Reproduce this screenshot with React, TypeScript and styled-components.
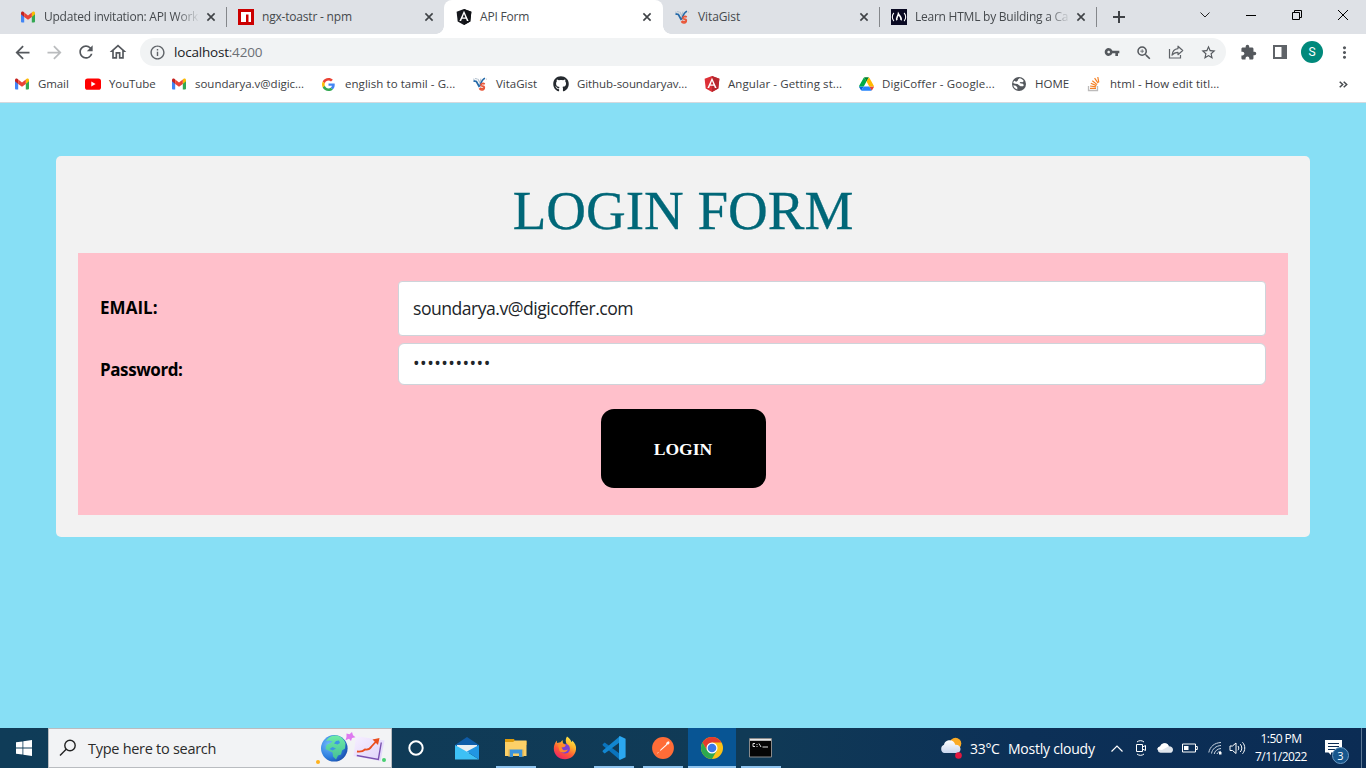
import React from 'react';
import styled, { createGlobalStyle } from 'styled-components';
import { MdArrowBack, MdArrowForward, MdRefresh, MdOutlineHome, MdInfoOutline, MdVpnKey, MdZoomIn, MdStarBorder, MdExtension, MdMoreVert } from 'react-icons/md';
import { FaGithub } from 'react-icons/fa';

const Global = createGlobalStyle`
  * { box-sizing: border-box; }
  body { margin: 0; overflow: hidden; font-family: "Open Sans", "Noto Sans", sans-serif; }
  svg { display: block; flex: none; }
`;

const Screen = styled.div`
  width: 1366px;
  height: 768px;
  display: flex;
  flex-direction: column;
  overflow: hidden;
`;

/* ---------- browser chrome ---------- */
const TabStrip = styled.div`
  height: 34px;
  flex: none;
  background: #dee1e6;
  display: flex;
  padding-left: 8px;
`;
const Tab = styled.div<{ $active?: boolean; $divider?: boolean; $width: number }>`
  position: relative;
  width: ${p => p.$width}px;
  margin-right: ${p => (p.$active ? -1 : 0)}px;
  height: 34px;
  padding-left: 12px;
  display: flex;
  align-items: center;
  background: ${p => (p.$active ? '#fff' : 'transparent')};
  border-radius: 8px 8px 0 0;
  ${p => p.$divider && `
    &::after { content: ''; position: absolute; right: -1px; top: 7px; width: 1px; height: 20px; background: #84878b; }
  `}
  ${p => p.$active && `
    &::before, &::after { content: ''; position: absolute; bottom: 0; width: 8px; height: 8px; }
    &::before { left: -8px; background: radial-gradient(circle at 0 0, transparent 7.5px, #fff 8px); }
    &::after { right: -8px; background: radial-gradient(circle at 100% 0, transparent 7.5px, #fff 8px); }
  `}
`;
const TabTitle = styled.span<{ $ls: number; $fade?: boolean; $width?: number }>`
  width: ${p => p.$width ?? 155}px;
  margin: 0 4px 0 8px;
  white-space: nowrap;
  font-size: 12px;
  line-height: 18px;
  color: #45494d;
  letter-spacing: ${p => p.$ls}px;
  ${p => p.$fade && 'mask-image: linear-gradient(90deg, #000 132px, transparent 156px);'}
`;
const NewTab = styled.div`
  width: 28px;
  margin-left: 9px;
  display: flex;
  align-items: center;
  justify-content: center;
`;
const WindowButtons = styled.div`
  margin-left: auto;
  display: flex;
  height: 29px;
`;
const WindowButton = styled.div`
  width: 46px;
  display: flex;
  align-items: center;
  justify-content: center;
`;
const Toolbar = styled.div`
  height: 36px;
  flex: none;
  background: #fff;
  display: flex;
  align-items: center;
  color: #5f6368;
`;
const NavButton = styled.div<{ $faded?: boolean; $drop?: number }>`
  width: 32px;
  padding-top: ${p => p.$drop ?? 0}px;
  display: flex;
  justify-content: center;
  color: ${p => (p.$faded ? '#babcbe' : '#54585d')};
`;
const NavGroup = styled.div`
  display: flex;
  align-items: center;
  padding-left: 6px;
  width: 140px;
`;
const ToolGroup = styled.div`
  display: flex;
  align-items: center;
  padding-left: 6px;
`;
const Omnibox = styled.div`
  width: 1086px;
  height: 28px;
  border-radius: 14px;
  background: #f1f3f4;
  display: flex;
  align-items: center;
  padding: 0 2px 0 9px;
`;
const Url = styled.span`
  flex: 1;
  margin-left: 8px;
  font-size: 13.5px;
  letter-spacing: -0.2px;
  color: #202124;
  i { font-style: normal; color: #6b6f74; }
`;
const Avatar = styled.div`
  width: 22px;
  height: 22px;
  border-radius: 50%;
  background: #00897b;
  color: #fff;
  font: 12px/22px Roboto, sans-serif;
  text-align: center;
`;
const Bookmarks = styled.div`
  height: 33px;
  flex: none;
  background: #fff;
  border-bottom: 1px solid #d5d9de;
  display: flex;
  align-items: center;
  padding: 0 0 4px 14px;
`;
const Bookmark = styled.div<{ $width: number; $gap: number; $ls?: number }>`
  width: ${p => p.$width}px;
  display: flex;
  align-items: center;
  gap: ${p => p.$gap}px;
  white-space: nowrap;
  font-size: 11.5px;
  line-height: 18px;
  letter-spacing: ${p => p.$ls ?? 0}px;
  color: #3c4043;
`;
const Overflow = styled.div`
  margin-left: auto;
  margin-right: 18px;
`;

/* ---------- web page ---------- */
const Page = styled.main`
  flex: 1;
  background: #87dff5;
  padding: 53px 56px 0;
`;
const Card = styled.section`
  height: 381px;
  border-radius: 5px;
  background: #f2f2f2;
  padding: 0 22px;
`;
const Heading = styled.h1`
  margin: 0;
  height: 97px;
  padding-top: 23px;
  font: 400 55px/64px "Liberation Serif", serif;
  -webkit-text-stroke: 0.3px #006778;
  color: #006778;
  text-align: center;
`;
const Form = styled.form`
  height: 262px;
  background: #ffc0cb;
  padding: 28px 22px 0;
  display: flex;
  flex-direction: column;
`;
const FieldRow = styled.div<{ $gap: number }>`
  display: flex;
  align-items: center;
  margin-bottom: ${p => p.$gap}px;
`;
const FieldLabel = styled.label<{ $top: number; $bottom: number; $ls: number }>`
  width: 298px;
  padding: ${p => p.$top}px 0 ${p => p.$bottom}px;
  font-size: 17px;
  font-weight: 700;
  line-height: 24px;
  letter-spacing: ${p => p.$ls}px;
  color: #000;
`;
const Field = styled.input<{ $height: number; $radius: number; $ls: number }>`
  width: 868px;
  height: ${p => p.$height}px;
  border: 1px solid #ced4da;
  border-radius: ${p => p.$radius}px;
  background: #fff;
  padding: 0 14px 2px;
  font: 400 17.6px "Open Sans", sans-serif;
  letter-spacing: ${p => p.$ls}px;
  color: #212529;
  outline: none;
`;
const LoginButton = styled.button`
  align-self: center;
  width: 165px;
  height: 79px;
  border: 0;
  border-radius: 13px;
  background: #000;
  color: #fff;
  padding: 2px 0 0;
  font: 700 17.6px "Liberation Serif", serif;
`;

/* ---------- taskbar ---------- */
const Taskbar = styled.footer`
  height: 40px;
  flex: none;
  display: flex;
  background: linear-gradient(90deg, #0f3c58 0%, #103a56 55%, #0c3057 75%, #0b2c54 100%);
  color: #fff;
`;
const Start = styled.div`
  width: 48px;
  display: flex;
  align-items: center;
  justify-content: center;
`;
const Search = styled.div`
  width: 344px;
  border: 1px solid #b9bcc0;
  background: #f2f3f5;
  display: flex;
  align-items: center;
  padding-left: 10px;
  color: #2b2b2b;
  font-size: 14.5px;
  letter-spacing: -0.28px;
`;
const SearchText = styled.span`
  margin-left: 11px;
  flex: 1;
`;
const TaskButton = styled.div<{ $first?: boolean; $running?: boolean; $active?: boolean }>`
  flex: none;
  width: ${p => (p.$first ? 50 : p.$active ? 48 : 49)}px;
  margin-left: ${p => (p.$active ? 1 : 0)}px;
  padding-right: ${p => (p.$first ? 2 : 0)}px;
  position: relative;
  display: flex;
  align-items: center;
  justify-content: center;
  background: ${p => (p.$active ? '#085594' : 'transparent')};
  ${p => p.$running && `
    &::after { content: ''; position: absolute; bottom: 0; left: ${p.$active ? 0 : 5}px; right: ${p.$active ? 0 : 4}px; height: 2px; background: #8fc4ef; }
  `}
`;
const Tray = styled.div`
  margin-left: auto;
  display: flex;
  align-items: center;
`;
const TrayText = styled.span<{ $width: number; $ls?: number }>`
  width: ${p => p.$width}px;
  white-space: nowrap;
  font-size: 14px;
  padding-top: 1px;
  letter-spacing: ${p => p.$ls ?? 0}px;
`;
const TrayIcon = styled.div<{ $width: number; $start?: boolean }>`
  width: ${p => p.$width}px;
  display: flex;
  justify-content: ${p => (p.$start ? 'flex-start' : 'center')};
`;
const Clock = styled.div`
  width: 68px;
  text-align: center;
  font-size: 12px;
  line-height: 18px;
  letter-spacing: -0.55px;
  white-space: nowrap;
  padding-bottom: 1px;
`;
const Notice = styled.div`
  width: 46px;
  height: 40px;
  position: relative;
  padding: 12px 0 0 10px;
`;
const NoticeCount = styled.span`
  position: absolute;
  left: 17px;
  top: 19px;
  width: 17px;
  height: 17px;
  border-radius: 50%;
  border: 1px solid #6d9cc4;
  background: #17568c;
  font-size: 11px;
  line-height: 15px;
  text-align: center;
`;
const DesktopEdge = styled.div`
  width: 5px;
  height: 40px;
  border-left: 1px solid #5c7895;
`;

/* ---------- icons ---------- */
const Gmail = ({ size = 16 }: { size?: number }) => (
  <svg width={size} height={size} viewBox="0 0 16 16">
    <path d="M1 3.800v8.700c0 .5.400.900.900.900h2.300V7.200z" fill="#4285f4" />
    <path d="M15 3.800v8.700c0 .5-.4.900-.9.900h-2.300V7.200z" fill="#34a853" />
    <path d="M11.800 3.500v4.400L15 5.300V4c0-1.500-1.500-2-2.400-1.200z" fill="#fbbc04" />
    <path d="M4.200 3.500v4.400L1 5.300V4c0-1.500 1.500-2 2.400-1.200z" fill="#c5221f" />
    <path d="M4.200 7.900V3.500L8 6.400l3.800-2.900v4.400L8 10.800z" fill="#ea4335" />
  </svg>
);
const Npm = () => (
  <svg width="16" height="16" viewBox="0 0 16 16">
    <path fill="#c00" d="M0 0h16v16H0z" />
    <path fill="#fff" d="M3 3h10v10h-2.500V5.500H8V13H3z" />
  </svg>
);
const Angular = ({ dark, size = 16 }: { dark?: boolean; size?: number }) => (
  <svg width={size} height={size} viewBox="0 0 16 16">
    <path fill={dark ? '#16181d' : '#dd2f36'} d="M8 0l7.400 2.700-1.100 9.800L8 16l-6.300-3.500L.6 2.700z" />
    <path fill={dark ? '#101216' : '#b7272e'} d="M8 0l7.400 2.700-1.100 9.800L8 16z" />
    <path fill="#fff" fillRule="evenodd" d="M8 1.800l4.600 10.300h-1.700l-.9-2.300H6l-.9 2.300H3.400zM8 5L6.600 8.400h2.800z" />
  </svg>
);
const Vita = () => (
  <svg width="16" height="16" viewBox="0 0 16 16" fill="none">
    <path d="M1.500 4.800l2.900.7 3 5.500" stroke="#2469a8" strokeWidth="1.700" />
    <path d="M3 2.500l2.500.5M6 3l2 4.500M9 2.600L8 6M1.200 3l1.300.5" stroke="#b4c2cf" strokeWidth="1.100" />
    <path d="M13 2.200C10.500 3 9.200 5.500 7.800 10.200" stroke="#2469a8" strokeWidth="1.700" />
    <path d="M12.800 8c-1.800-1-4-.3-3.800 1.200.3 1.300 3 .6 3.300 1.900.3 1.500-2.500 2.300-4.600.9" stroke="#e9573a" strokeWidth="1.800" />
    <path d="M7.300 12.500c1.200 2.300 5 2 5-.8" stroke="#e9573a" strokeWidth="1.500" />
    <path d="M14.500 2.700v.8" stroke="#bbb" />
  </svg>
);
const Camp = () => (
  <svg width="16" height="16" viewBox="0 0 16 16" fill="none" stroke="#fff">
    <path fill="#0a0a23" stroke="none" d="M0 0h16v16H0z" />
    <path d="M2.900 4C.8 6 .8 10 2.900 12M13.100 4c2.100 2 2.100 6 0 8" strokeWidth="1.100" />
    <path d="M6 11.300c-1.400-2 .8-3.200 1.400-6.500 1.300 2.200 3.900 4.300 2.500 6.500" strokeWidth="1.600" />
  </svg>
);
const Close = () => (
  <svg width="16" height="16" viewBox="0 0 16 16" stroke="#3f4246" strokeWidth="1.600">
    <path d="M4.400 4.400l7.200 7.200M11.600 4.400l-7.200 7.200" />
  </svg>
);
const YouTube = () => (
  <svg width="16" height="16" viewBox="0 0 16 16">
    <rect y="2.500" width="16" height="11.300" rx="2.600" fill="#f00" />
    <path d="M6.300 5.600v5l4.300-2.500z" fill="#fff" />
  </svg>
);
const Google = () => (
  <svg width="13" height="13" viewBox="0 0 48 48">
    <path fill="#EA4335" d="M24 9.500c3.540 0 6.710 1.220 9.210 3.600l6.850-6.850C35.900 2.380 30.470 0 24 0 14.620 0 6.510 5.380 2.560 13.220l7.980 6.190C12.430 13.720 17.740 9.500 24 9.500z" />
    <path fill="#4285F4" d="M46.980 24.550c0-1.570-.15-3.090-.38-4.550H24v9.020h12.940c-.58 2.960-2.260 5.480-4.780 7.180l7.730 6c4.510-4.180 7.090-10.360 7.090-17.650z" />
    <path fill="#FBBC05" d="M10.530 28.590c-.48-1.450-.76-2.990-.76-4.590s.27-3.140.76-4.590l-7.980-6.190C.92 16.460 0 20.120 0 24c0 3.880.92 7.540 2.560 10.780l7.970-6.190z" />
    <path fill="#34A853" d="M24 48c6.480 0 11.930-2.130 15.890-5.810l-7.730-6c-2.150 1.450-4.920 2.300-8.160 2.300-6.260 0-11.570-4.220-13.470-9.910l-7.980 6.190C6.510 42.620 14.620 48 24 48z" />
  </svg>
);
const Drive = () => (
  <svg width="15" height="14" viewBox="0 0 87.300 78">
    <path fill="#0066da" d="m6.600 66.850 3.850 6.650c.8 1.400 1.950 2.500 3.300 3.300l13.750-23.800h-27.500c0 1.550.4 3.100 1.200 4.500z" />
    <path fill="#00ac47" d="m43.650 25-13.750-23.800c-1.350.8-2.500 1.900-3.300 3.300l-25.400 44a9.060 9.060 0 0 0-1.200 4.500h27.500z" />
    <path fill="#ea4335" d="m73.550 76.800c1.350-.8 2.500-1.900 3.300-3.300l1.600-2.750 7.650-13.250c.8-1.400 1.200-2.950 1.200-4.500h-27.502l5.852 11.500z" />
    <path fill="#00832d" d="m43.650 25 13.750-23.800c-1.350-.8-2.900-1.200-4.500-1.200h-18.500c-1.600 0-3.150.45-4.500 1.200z" />
    <path fill="#2684fc" d="m59.800 53h-32.300l-13.750 23.800c1.350.8 2.900 1.200 4.500 1.200h50.800c1.600 0 3.150-.45 4.500-1.200z" />
    <path fill="#ffba00" d="m73.400 26.500-12.700-22c-.8-1.400-1.950-2.500-3.300-3.300l-13.750 23.800 16.150 28h27.450c0-1.550-.4-3.100-1.200-4.500z" />
  </svg>
);
const Globe = () => (
  <svg width="16" height="16" viewBox="0 0 16 16">
    <circle cx="8" cy="8" r="7" fill="#54585d" />
    <path fill="#fff" d="M8.500 2.200c2 .3 3.300 1.200 4.300 2.800l-1.300 1.200-2-.2-1 1 1.700.6 1.800.2.8 1.500-.8.900H9.500L8 9.300 6.500 8 4 7.800 2.200 7c.2-.8.5-1.500 1-2.200l2 .9 1.500-.9.300-1.400zM2.300 9.300l2.500.5 1.500 1.400v2.300C4.200 13 2.700 11.300 2.300 9.300z" />
  </svg>
);
const Stack = () => (
  <svg width="14" height="16" viewBox="0 0 14 16" fill="none">
    <path d="M1.500 10v4.500h9V10" stroke="#bcbbbb" strokeWidth="1.300" />
    <path d="M3 12.300h6M3.100 10l6 .8M3.800 7.300l5.600 2.300M5.300 4.700l4.800 3.900M7.600 2.200l3.500 5M10.800 1l1 5.300" stroke="#f48024" strokeWidth="1.200" />
  </svg>
);
const Share = () => (
  <svg width="16" height="16" viewBox="0 0 16 16" fill="none" stroke="#5f6368" strokeWidth="1.200">
    <path d="M1.500 5v9h11v-3" />
    <path d="M10 2.200l4.700 4.300L10 10.700V8.300c-2.800 0-4.500.9-6 2.900.4-3.500 2.500-6.200 6-6.600z" strokeLinejoin="round" />
  </svg>
);
const SidePanel = () => (
  <svg width="14" height="14" viewBox="0 0 14 14">
    <path fill="#5f6368" fillRule="evenodd" d="M0 0h14v14H0zM2 2v10h6.500V2z" />
  </svg>
);
const Magnifier = () => (
  <svg width="18" height="18" viewBox="0 0 18 18" fill="none" stroke="#222" strokeWidth="1.400">
    <circle cx="11" cy="6.500" r="5.200" />
    <path d="M7.200 10.300L1 16.500" />
  </svg>
);
const Highlight = () => (
  <svg width="75" height="38" viewBox="0 0 75 38">
    <defs>
      <radialGradient id="sea" cx=".3" cy=".35" r=".8"><stop offset="0" stopColor="#6fb8fa" /><stop offset=".6" stopColor="#2e7fdf" /><stop offset="1" stopColor="#1647a3" /></radialGradient>
      <linearGradient id="sheet" x1="0" y1="0" x2="1" y2="1"><stop offset="0" stopColor="#f7efff" /><stop offset="1" stopColor="#ddd2fa" /></linearGradient>
      <linearGradient id="land" x1="0" y1="0" x2="0" y2="1"><stop offset="0" stopColor="#6deba6" /><stop offset="1" stopColor="#46bf96" /></linearGradient>
    </defs>
    <circle cx="18.300" cy="19.300" r="13.300" fill="url(#sea)" />
    <path d="M10 12c2-4 6-6 11-5.500 4 .8 7.500 4 8.500 8l-.5 5-3 2-1 4-3 1-2 4-3-3-.5-4-4-2-3-1.500 1-4 4-2 2-1.500-3-1z" fill="url(#land)" />
    <path d="M18 14.500l3.500 1 2.500-1.500-1-2.500-3 .5zM13.500 20l3 1.500 3.500-2-3.500-1.500z" fill="#3c95e4" />
    <path d="M30.500 4.500l3 .8L36 3l1 3.200 2.500 2-3.500.8-1 3-2-2.300-3.500 1.500 1-3.200z" fill="#dd79ef" />
    <path d="M40 7l28.500 4.500-4 20.500-27-5z" fill="url(#sheet)" />
    <path d="M65.300 13.500l-3 17-21.500-4" stroke="#7950b0" strokeWidth="1.400" fill="none" />
    <path d="M41 22.500c4 .5 6 0 8-2 3 .5 5-.5 6.500-3l5.500-6" stroke="#ea4e1d" strokeWidth="1.800" fill="none" />
    <path d="M56.500 10.500l7-1.500-1.500 7z" fill="#ea4e1d" />
    <circle cx="2" cy="33" r="2" fill="#ffb21c" />
    <circle cx="68" cy="31" r="2" fill="#48cf72" />
  </svg>
);
const WindowsLogo = () => (
  <svg width="16" height="16" viewBox="0 0 16 16" fill="#fff">
    <path d="M0 2.300l6.500-.9v6.200H0zM7.300 1.300L16 0v7.600H7.300zM0 8.400h6.500v6.200L0 13.700zM7.300 8.400H16V16l-8.700-1.300z" />
  </svg>
);
const Mail = () => (
  <svg width="24" height="23" viewBox="0 0 24 23">
    <path d="M0 8L12 0l12 8v5H0z" fill="#0f5ca8" />
    <path d="M2 8h20v5l-10 4L2 12z" fill="#e9eef2" />
    <path d="M0 8v14.500h24L11.500 14.500z" fill="#3dc0f5" />
    <path d="M24 8L11.800 14.500 24 22.500z" fill="#2196e3" />
  </svg>
);
const Folder = () => (
  <svg width="22" height="20" viewBox="0 0 22 20">
    <path d="M0 1h9l1 2h11.500v4H0z" fill="#dd9b0c" />
    <path d="M0 4h8l2-1.500h11.500V18H0z" fill="#fcd068" />
    <path d="M4.500 19v-7.500h13V19H14v-3.500H8V19z" fill="#3c94dc" />
    <path d="M3.500 11.500h1V19h-1zM17.500 11.500h1V19h-1z" fill="#e0b04a" />
  </svg>
);
const Firefox = () => (
  <svg width="24" height="24" viewBox="0 0 24 24">
    <defs>
      <linearGradient id="fire" x1=".8" y1="0" x2=".25" y2="1"><stop offset="0" stopColor="#fff44f" /><stop offset=".35" stopColor="#ffb22c" /><stop offset=".65" stopColor="#ff5a36" /><stop offset="1" stopColor="#ee1f69" /></linearGradient>
    </defs>
    <path d="M14 .5c3 2 4 4 4.500 5.500 1-.2.500-1 .7-1.500C22 7 23.500 10 23 13.500 22.300 19.500 17.500 23.300 12 23.300 5.500 23.300.8 18.600.8 12.500.8 9.500 2 6.500 3.800 4.500L4 7l3.500-.8L9.500 4l.5 3.500 4 1.500c-1.500-3-1.800-6 0-8.500z" fill="url(#fire)" />
    <circle cx="12" cy="12.700" r="4.900" fill="#7a3fd6" />
    <path d="M5 9l5-1.500 3 1.500-1.500 2-3 .5 1.500 2.500c2 1 3.500-.5 5-.5-1.500 3-6 4-8.500 1.500z" fill="#ff8a2a" />
  </svg>
);
const VsCode = () => (
  <svg width="24" height="24" viewBox="0 0 24 24">
    <path d="M.6 8.200L2.700 6.400 18.500 18.300 17.800 23.800.8 9.500z" fill="#0a74bd" />
    <path d="M.6 15.800l2.100 1.800L18.500 5.700 17.800.2.8 14.500z" fill="#1286d0" />
    <path d="M17.800.1l5.800 2.700v18.400l-5.800 2.700c-.5-.2-.8-.6-.8-1V1.100c0-.4.300-.8.800-1z" fill="#2ba7f0" />
  </svg>
);
const Postman = () => (
  <svg width="22" height="22" viewBox="0 0 22 22">
    <circle cx="11" cy="11" r="10.900" fill="#ff6c37" />
    <path d="M16.500 4.300c1.300.7 1.200 2 .5 2.800-1 .8-2 .3-2.400 1.400L9.500 13l-4 3.500-.5-.5 3-1.500.5-2 5.500-5c.2-1.500 1-3 2.500-3.200z" fill="#fff" opacity=".95" />
  </svg>
);
const Chrome = () => (
  <svg width="22" height="22" viewBox="0 0 22 22">
    <circle cx="11" cy="11" r="11" fill="#fbc116" />
    <path d="M1.500 5.500A11 11 0 0 1 20.500 5.500H11L6.300 13.700z" fill="#e33b2e" />
    <path d="M1.500 5.500a11 11 0 0 0 9.500 16.500l4.700-8.300H6.300z" fill="#2da94f" />
    <circle cx="11" cy="11" r="5.500" fill="#fff" />
    <circle cx="11" cy="11" r="4.300" fill="#3b78e7" />
  </svg>
);
const Terminal = () => (
  <svg width="23" height="20" viewBox="0 0 23 20" fill="none">
    <path d="M.5.500h22v18.500H.5z" fill="#050505" stroke="#8a8a8a" />
    <path d="M1 1h21v1.800H1z" fill="#e5e5e5" />
    <path d="M6 5.500H4v3h2M8 6v1M8 8v1M10 5.500l2 3.500M13.500 9h5.500" stroke="#ddd" strokeWidth="1" />
  </svg>
);
const Weather = () => (
  <svg width="23" height="22" viewBox="1 0 23 22">
    <defs><linearGradient id="cloud" x1="0" y1="0" x2="0" y2="1"><stop offset="0" stopColor="#fff" /><stop offset="1" stopColor="#c9d6ee" /></linearGradient></defs>
    <circle cx="16.500" cy="6.500" r="5.800" fill="#fbab26" />
    <path d="M5 16a4.400 4.400 0 0 1 0-8.200c.8-3.600 3.500-4.600 5.500-4.600 3 0 5.300 2 5.700 4.600 3.500-.2 5.300 1.900 5.300 4.200 0 2.500-1.800 4-4.200 4z" fill="url(#cloud)" />
    <circle cx="19.500" cy="18.500" r="3.300" fill="#e5173f" />
  </svg>
);

const tabs = [
  { title: 'Updated invitation: API Work', icon: <Gmail />, fade: true, divider: true, ls: -0.24, width: 218 },
  { title: 'ngx-toastr - npm', icon: <Npm />, ls: -0.2, width: 218 },
  { title: 'API Form', icon: <Angular dark />, active: true, ls: -0.2, width: 219 },
  { title: 'VitaGist', icon: <Vita />, divider: true, ls: -0.1, width: 217, titleWidth: 154 },
  { title: 'Learn HTML by Building a Ca', icon: <Camp />, fade: true, divider: true, ls: -0.24, width: 217, titleWidth: 154 },
];

const bookmarks = [
  { name: 'Gmail', icon: <Gmail />, width: 71, gap: 8, ls: -0.1 },
  { name: 'YouTube', icon: <YouTube />, width: 86, gap: 8, ls: -0.1 },
  { name: 'soundarya.v@digic...', icon: <Gmail />, width: 151, gap: 8, ls: -0.02 },
  { name: 'english to tamil - G...', icon: <Google />, width: 150, gap: 10, ls: 0.05 },
  { name: 'VitaGist', icon: <Vita />, width: 81, gap: 8, ls: 0 },
  { name: 'Github-soundaryav...', icon: <FaGithub size={16} color="#24292e" />, width: 151, gap: 8, ls: -0.08 },
  { name: 'Angular - Getting st...', icon: <Angular />, width: 155, gap: 8, ls: 0.09 },
  { name: 'DigiCoffer - Google...', icon: <Drive />, width: 152, gap: 8, ls: 0.13 },
  { name: 'HOME', icon: <Globe />, width: 76, gap: 8, ls: 0 },
  { name: 'html - How edit titl...', icon: <Stack />, width: 140, gap: 9, ls: 0.05 },
];

export default function App() {
  return (
    <Screen>
      <Global />
      <TabStrip>
        {tabs.map(t => (
          <Tab key={t.title} $width={t.width} $active={t.active} $divider={t.divider}>
            {t.icon}
            <TabTitle $ls={t.ls} $fade={t.fade} $width={t.titleWidth}>{t.title}</TabTitle>
            <Close />
          </Tab>
        ))}
        <NewTab>
          <svg width="12" height="12" viewBox="0 0 12 12" stroke="#3f4246" strokeWidth="2"><path d="M6 0v12M0 6h12" /></svg>
        </NewTab>
        <WindowButtons>
          <WindowButton><svg width="10" height="6" viewBox="0 0 10 6" fill="none" stroke="#222"><path d="M.5.500L5 5 9.500.5" /></svg></WindowButton>
          <WindowButton><svg width="10" height="2" viewBox="0 0 10 2"><path d="M0 1h10v1H0z" /></svg></WindowButton>
          <WindowButton><svg width="10" height="10" viewBox="0 0 10 10" fill="none" stroke="#000"><path d="M.5 2.500h7v7h-7zM2.500 2V.5h7v7H8" /></svg></WindowButton>
          <WindowButton><svg width="10" height="10" viewBox="0 0 10 10" stroke="#000"><path d="M0 0l10 10M10 0L0 10" /></svg></WindowButton>
        </WindowButtons>
      </TabStrip>
      <Toolbar>
        <NavGroup>
          <NavButton><MdArrowBack size={21} /></NavButton>
          <NavButton $faded><MdArrowForward size={21} /></NavButton>
          <NavButton><MdRefresh size={20} /></NavButton>
          <NavButton><MdOutlineHome size={20} /></NavButton>
        </NavGroup>
        <Omnibox>
          <MdInfoOutline size={17} />
          <Url>localhost<i>:4200</i></Url>
          <NavButton><MdVpnKey size={16} /></NavButton>
          <NavButton $drop={1}><MdZoomIn size={18} /></NavButton>
          <NavButton><Share /></NavButton>
          <NavButton><MdStarBorder size={17} /></NavButton>
        </Omnibox>
        <ToolGroup>
          <NavButton><MdExtension size={17} /></NavButton>
          <NavButton><SidePanel /></NavButton>
          <NavButton><Avatar>S</Avatar></NavButton>
          <NavButton><MdMoreVert size={19} /></NavButton>
        </ToolGroup>
      </Toolbar>
      <Bookmarks>
        {bookmarks.map(b => (
          <Bookmark key={b.name} $width={b.width} $gap={b.gap} $ls={b.ls}>{b.icon}{b.name}</Bookmark>
        ))}
        <Overflow>
          <svg width="9" height="7" viewBox="0 0 9 7" fill="none" stroke="#45494d" strokeWidth="1.500"><path d="M.7.700l3 2.800-3 2.800M4.700.7l3 2.800-3 2.800" /></svg>
        </Overflow>
      </Bookmarks>

      <Page>
        <Card>
          <Heading>LOGIN FORM</Heading>
          <Form>
            <FieldRow $gap={7}>
              <FieldLabel $top={0} $bottom={2} $ls={0.05}>EMAIL:</FieldLabel>
              <Field $height={55} $radius={4} $ls={-0.5} defaultValue="soundarya.v@digicoffer.com" />
            </FieldRow>
            <FieldRow $gap={24}>
              <FieldLabel $top={12} $bottom={0} $ls={-0.42}>Password:</FieldLabel>
              <Field type="password" $height={42} $radius={6} $ls={0.45} defaultValue="soundarya12" />
            </FieldRow>
            <LoginButton type="button">LOGIN</LoginButton>
          </Form>
        </Card>
      </Page>

      <Taskbar>
        <Start><WindowsLogo /></Start>
        <Search>
          <Magnifier />
          <SearchText>Type here to search</SearchText>
          <Highlight />
        </Search>
        <TaskButton $first><svg width="16" height="16" viewBox="0 0 16 16"><circle cx="8" cy="8" r="6.700" fill="none" stroke="#fff" strokeWidth="2" /></svg></TaskButton>
        <TaskButton><Mail /></TaskButton>
        <TaskButton $running><Folder /></TaskButton>
        <TaskButton><Firefox /></TaskButton>
        <TaskButton $running><VsCode /></TaskButton>
        <TaskButton $running><Postman /></TaskButton>
        <TaskButton $running $active><Chrome /></TaskButton>
        <TaskButton $running><Terminal /></TaskButton>
        <Tray>
          <TrayIcon $width={30} $start><Weather /></TrayIcon>
          <TrayText $width={38} $ls={-0.3}>33°C</TrayText>
          <TrayText $width={97} $ls={-0.23}>Mostly cloudy</TrayText>
          <TrayIcon $width={24}><svg width="12" height="7" viewBox="0 0 12 7" fill="none" stroke="#fff" strokeWidth="1.200"><path d="M.5 6.500L6 1l5.500 5.500" /></svg></TrayIcon>
          <TrayIcon $width={24}><svg width="12" height="16" viewBox="0 0 12 16" fill="none" stroke="#fff"><path d="M1.500 4.500h6v7h-6zM7.500 7l3-1.500v5L7.500 9M2 2C4 .2 7 .2 9 2M2 14c2 1.800 5 1.800 7 0" /></svg></TrayIcon>
          <TrayIcon $width={24}><svg width="16" height="10" viewBox="0 0 16 10"><path d="M3.500 9.800a3.200 3.200 0 0 1-.3-6.300C4 1.300 5.800.3 7.600.3c2.100 0 3.600 1.300 4.200 3C14.200 3.200 16 4.600 16 6.700c0 1.900-1.300 3.100-3 3.100z" fill="#dfe5ec" /><path d="M.3 6.500C.4 4.800 1.600 3.600 3.200 3.500 4 1.300 5.800.3 7.600.3c2.100 0 3.600 1.300 4.200 3L5 7z" fill="#fff" /></svg></TrayIcon>
          <TrayIcon $width={25}><svg width="16" height="10" viewBox="0 0 16 10" fill="none" stroke="#fff"><path d="M.5 1h13v8H.5zM14 3.500h1.300v3H14" /><path d="M2 3h4.500v4H2z" fill="#fff" stroke="none" /></svg></TrayIcon>
          <TrayIcon $width={25}><svg width="14" height="14" viewBox="0 0 14 14" fill="none" stroke="#cbd6e2"><path d="M.8 11.500C2 5.500 6.500 1.800 13 1.500M3.500 12.500C4.200 8 8 4.800 13 4.500M6.200 13C6.800 10 9.500 7.700 13 7.500M9 13c.3-1.500 2-2.700 4-2.700" /><path d="M11 11h2.500v2.500H11z" fill="#fff" stroke="none" /></svg></TrayIcon>
          <TrayIcon $width={20}><svg width="17" height="14" viewBox="0 0 17 14" fill="none" stroke="#fff"><path d="M1 5h2.500L7 2v10.500L3.500 9.500H1zM9 5c1 1.200 1 3 0 4.200M11.300 3.200c2 2.300 2 5.500 0 7.800M13.500 1.300c3 3.400 3 8 0 11.500" /></svg></TrayIcon>
          <Clock>1:50 PM<br />7/11/2022</Clock>
          <Notice>
            <svg width="17" height="15" viewBox="0 0 17 15"><path fill="#fff" d="M0 0h17v12.500H6V15l-2.500-2.500H0z" /><path d="M3 3.500h11M3 6.500h11M3 9.500h7" stroke="#0b2c54" /></svg>
            <NoticeCount>3</NoticeCount>
          </Notice>
          <DesktopEdge />
        </Tray>
      </Taskbar>
    </Screen>
  );
}
